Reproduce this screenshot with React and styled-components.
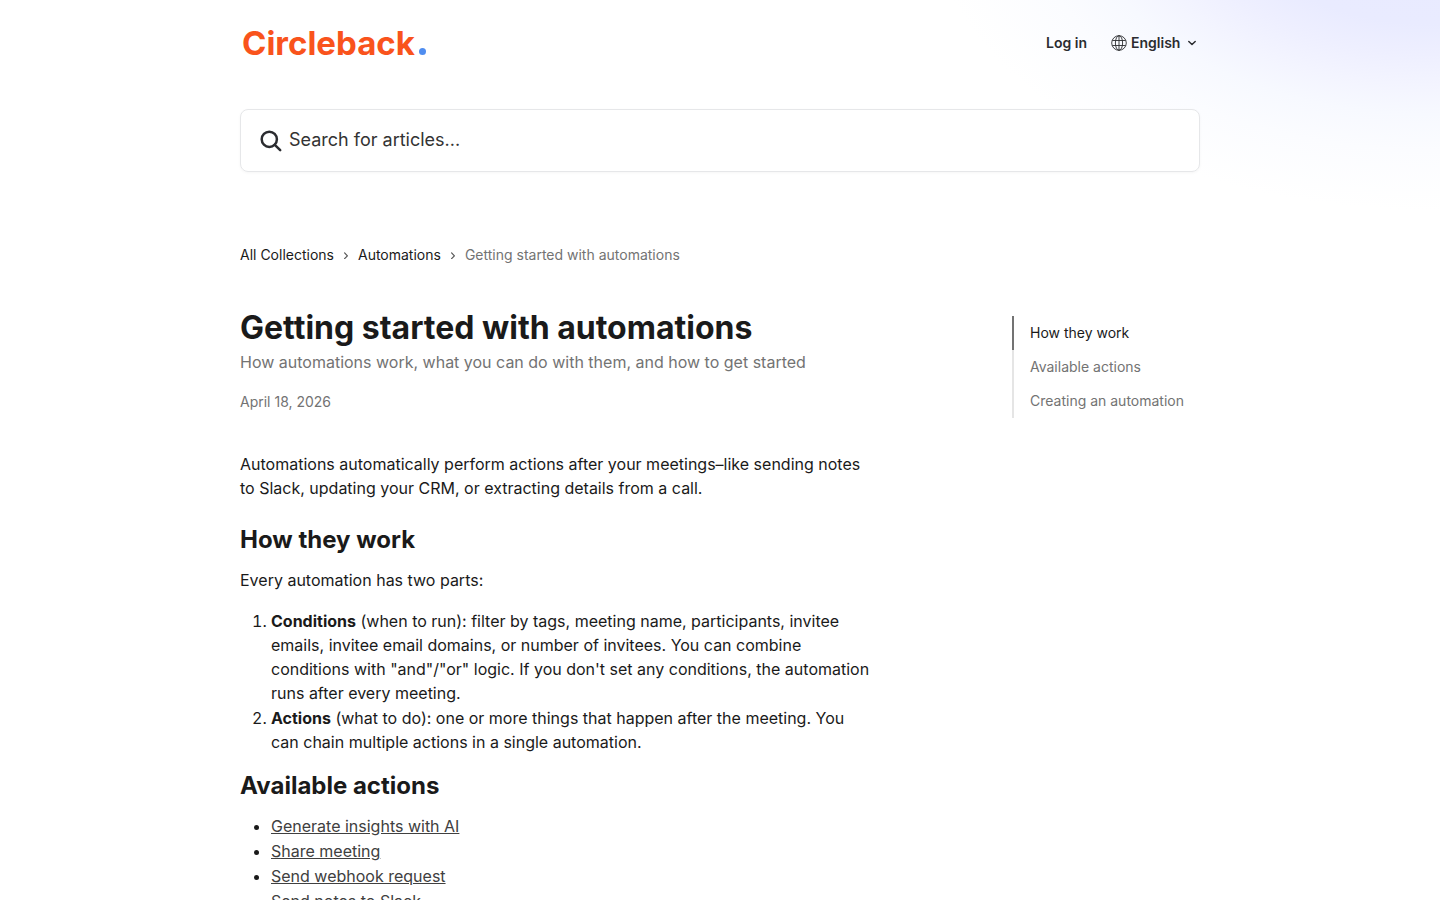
import React from 'react';
import styled, { createGlobalStyle } from 'styled-components';

const GlobalStyle = createGlobalStyle`
  * {
    box-sizing: border-box;
  }

  body {
    margin: 0;
    background: #ffffff;
    color: #1a1a1a;
    font-family: Inter, 'Liberation Sans', sans-serif;
    font-size: 16px;
    line-height: 24px;
  }

  h1, h2, p, ol, ul {
    margin: 0;
  }

  a {
    color: inherit;
    text-decoration: none;
  }
`;

// --- Page ---
const Page = styled.div`
  min-height: 100vh;
  padding: 0 24px 64px;
  background: radial-gradient(
      ellipse 500px 300px at calc(100% - 10px) -90px,
      #e8e9ff 0%,
      #e9ebff 38%,
      #eeefff 48%,
      #f3f4ff 58%,
      #f7f9ff 68%,
      #fbfcff 80%,
      #ffffff 100%
    )
    no-repeat;
`;

const Container = styled.div`
  max-width: 960px;
  margin: 0 auto;
`;

// --- Header ---
const Header = styled.header`
  display: flex;
  align-items: center;
  justify-content: space-between;
  padding: 27px 0 49px;
`;

const Logo = styled.a`
  display: flex;
  align-items: baseline;
  gap: 4px;
  padding-left: 2px;
  color: #f9531c;
  font-size: 33px;
  font-weight: 700;
  line-height: 33px;
`;

const LogoDot = styled.span`
  width: 7px;
  height: 7px;
  border-radius: 50%;
  background: #4f8df0;
`;

const Nav = styled.nav`
  display: flex;
  align-items: center;
  gap: 24px;
  padding-bottom: 2px;
  font-size: 14px;
  font-weight: 600;
  line-height: 20px;
  color: #2b2c30;
`;

const LanguagePicker = styled.label`
  display: flex;
  align-items: center;
  gap: 4px;
`;

const LanguageSelect = styled.select`
  appearance: none;
  padding: 0;
  border: 0;
  background: none;
  color: inherit;
  font: inherit;
  cursor: pointer;
`;

// --- Search ---
const SearchBox = styled.label`
  display: flex;
  align-items: center;
  gap: 7px;
  height: 63px;
  padding: 0 19px;
  border: 1px solid #e6e7e9;
  border-radius: 8px;
  background: rgba(255, 255, 255, 0.8);
  box-shadow: 0 1px 3px rgba(0, 0, 0, 0.04);
`;

const SearchInput = styled.input`
  flex: 1;
  min-width: 0;
  padding: 0 0 2px;
  border: 0;
  outline: none;
  background: none;
  color: #333333;
  font: inherit;
  font-size: 18px;

  &::placeholder {
    color: #333333;
    opacity: 1;
  }
`;

// --- Breadcrumb ---
const Breadcrumb = styled.nav`
  display: flex;
  align-items: center;
  gap: 8px;
  margin-top: 73px;
  font-size: 14px;
  line-height: 20px;
`;

const Muted = styled.span`
  color: #737373;
`;

// --- Article ---
const Columns = styled.div`
  display: flex;
  align-items: flex-start;
  justify-content: space-between;
  gap: 48px;
  margin-top: 43px;
`;

const Article = styled.article`
  flex: 0 1 632px;
`;

const Title = styled.h1`
  font-size: 32px;
  font-weight: 700;
  line-height: 40px;
`;

const Subtitle = styled.p`
  margin-top: 2px;
  color: #737373;
`;

const PostDate = styled.p`
  margin: 18px 0 40px;
  color: #737373;
  font-size: 14px;
  line-height: 20px;
`;

const Heading = styled.h2`
  margin: ${({ $afterList }) => ($afterList ? '16px' : '24px')} 0 12px;
  font-size: 24px;
  font-weight: 700;
  line-height: 32px;
`;

const List = styled.ul`
  padding-left: 31px;

  p + & {
    margin-top: 17px;
  }

  li + li {
    margin-top: 1px;
  }
`;

const ActionLink = styled.a`
  color: #404040;
  text-decoration: underline;
`;

// --- Table of contents ---
const Toc = styled.nav`
  display: flex;
  flex: 0 0 188px;
  flex-direction: column;
  margin-top: 8px;
`;

const TocLink = styled.a`
  padding: 7px 0 7px 16px;
  border-left: 2px solid ${({ $active }) => ($active ? '#737373' : '#e5e5e5')};
  color: ${({ $active }) => ($active ? '#1a1a1a' : '#737373')};
  font-size: 14px;
  line-height: 20px;
`;

const GlobeIcon = () => (
  <svg width="16" height="16" viewBox="0 0 16 16" fill="none" stroke="currentColor" strokeWidth="0.9" aria-hidden="true">
    <circle cx="8" cy="8" r="7.3" />
    <ellipse cx="8" cy="8" rx="3.6" ry="7.3" />
    <path d="M8 0.7v14.6M1.3 5.5h13.4M1.3 10.5h13.4" />
  </svg>
);

const ChevronDown = () => (
  <svg width="15" height="16" viewBox="0 0 15 16" fill="none" stroke="currentColor" strokeWidth="1.5" aria-hidden="true">
    <path d="M3.8 6.5 7 9.5l3.2-3" strokeLinecap="round" strokeLinejoin="round" />
  </svg>
);

const SearchIcon = () => (
  <svg width="22" height="22" viewBox="0 0 22 22" fill="none" stroke="#2b2c30" strokeWidth="2.5" aria-hidden="true">
    <circle cx="9.3" cy="9.3" r="7.6" />
    <path d="M14.8 14.8l5.4 5.4" strokeLinecap="round" />
  </svg>
);

const ChevronRight = () => (
  <svg width="8" height="8" viewBox="0 0 8 8" fill="none" stroke="#555555" strokeWidth="1.2" aria-hidden="true">
    <path d="M2.6 1.9 5.4 4.8 2.6 7.6" strokeLinecap="round" strokeLinejoin="round" />
  </svg>
);

const sections = [
  { id: 'how-they-work', label: 'How they work' },
  { id: 'available-actions', label: 'Available actions' },
  { id: 'creating-an-automation', label: 'Creating an automation' },
];

const actions = [
  'Generate insights with AI',
  'Share meeting',
  'Send webhook request',
  'Send notes to Slack',
];

const App = () => (
  <>
    <GlobalStyle />
    <Page>
      <Container>
        <Header>
          <Logo href="#">
            Circleback
            <LogoDot />
          </Logo>
          <Nav>
            <a href="#login">Log in</a>
            <LanguagePicker>
              <GlobeIcon />
              <LanguageSelect aria-label="Language" defaultValue="en">
                <option value="en">English</option>
              </LanguageSelect>
              <ChevronDown />
            </LanguagePicker>
          </Nav>
        </Header>

        <SearchBox>
          <SearchIcon />
          <SearchInput type="text" aria-label="Search for articles" placeholder="Search for articles..." />
        </SearchBox>

        <Breadcrumb>
          <a href="#collections">All Collections</a>
          <ChevronRight />
          <a href="#automations">Automations</a>
          <ChevronRight />
          <Muted>Getting started with automations</Muted>
        </Breadcrumb>

        <Columns>
          <Article>
            <Title>Getting started with automations</Title>
            <Subtitle>How automations work, what you can do with them, and how to get started</Subtitle>
            <PostDate>April 18, 2026</PostDate>

            <p>
              Automations automatically perform actions after your meetings–like sending notes to Slack, updating
              your CRM, or extracting details from a call.
            </p>

            <Heading id="how-they-work">How they work</Heading>
            <p>Every automation has two parts:</p>
            <List as="ol">
              <li>
                <b>Conditions</b> (when to run): filter by tags, meeting name, participants, invitee emails, invitee
                email domains, or number of invitees. You can combine conditions with "and"/"or" logic. If you don't
                set any conditions, the automation runs after every meeting.
              </li>
              <li>
                <b>Actions</b> (what to do): one or more things that happen after the meeting. You can chain multiple
                actions in a single automation.
              </li>
            </List>

            <Heading id="available-actions" $afterList>
              Available actions
            </Heading>
            <List>
              {actions.map((action) => (
                <li key={action}>
                  <ActionLink href="#action">{action}</ActionLink>
                </li>
              ))}
            </List>
          </Article>

          <Toc>
            {sections.map((section, index) => (
              <TocLink key={section.id} href={`#${section.id}`} $active={index === 0}>
                {section.label}
              </TocLink>
            ))}
          </Toc>
        </Columns>
      </Container>
    </Page>
  </>
);

export default App;
